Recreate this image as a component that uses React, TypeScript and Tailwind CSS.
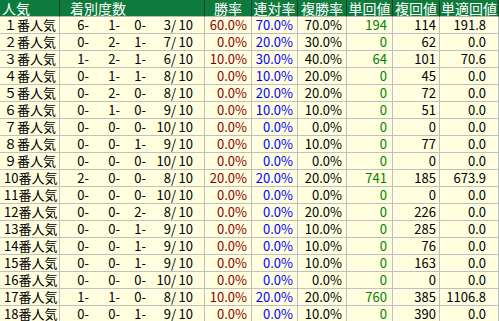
const rows: [string, string[], string, string, string, string, string, string][] = [
  ['１番人気', ['6', '1', '0', '3', '10'], '60.0%', '70.0%', '70.0%', '194', '114', '191.8'],
  ['２番人気', ['0', '2', '1', '7', '10'], '0.0%', '20.0%', '30.0%', '0', '62', '0.0'],
  ['３番人気', ['1', '2', '1', '6', '10'], '10.0%', '30.0%', '40.0%', '64', '101', '70.6'],
  ['４番人気', ['0', '1', '1', '8', '10'], '0.0%', '10.0%', '20.0%', '0', '45', '0.0'],
  ['５番人気', ['0', '2', '0', '8', '10'], '0.0%', '20.0%', '20.0%', '0', '72', '0.0'],
  ['６番人気', ['0', '1', '0', '9', '10'], '0.0%', '10.0%', '10.0%', '0', '51', '0.0'],
  ['７番人気', ['0', '0', '0', '10', '10'], '0.0%', '0.0%', '0.0%', '0', '0', '0.0'],
  ['８番人気', ['0', '0', '1', '9', '10'], '0.0%', '0.0%', '10.0%', '0', '77', '0.0'],
  ['９番人気', ['0', '0', '0', '10', '10'], '0.0%', '0.0%', '0.0%', '0', '0', '0.0'],
  ['10番人気', ['2', '0', '0', '8', '10'], '20.0%', '20.0%', '20.0%', '741', '185', '673.9'],
  ['11番人気', ['0', '0', '0', '10', '10'], '0.0%', '0.0%', '0.0%', '0', '0', '0.0'],
  ['12番人気', ['0', '0', '2', '8', '10'], '0.0%', '0.0%', '20.0%', '0', '226', '0.0'],
  ['13番人気', ['0', '0', '1', '9', '10'], '0.0%', '0.0%', '10.0%', '0', '285', '0.0'],
  ['14番人気', ['0', '0', '1', '9', '10'], '0.0%', '0.0%', '10.0%', '0', '76', '0.0'],
  ['15番人気', ['0', '0', '1', '9', '10'], '0.0%', '0.0%', '10.0%', '0', '163', '0.0'],
  ['16番人気', ['0', '0', '0', '10', '10'], '0.0%', '0.0%', '0.0%', '0', '0', '0.0'],
  ['17番人気', ['1', '1', '0', '8', '10'], '10.0%', '20.0%', '20.0%', '760', '385', '1106.8'],
  ['18番人気', ['0', '0', '1', '9', '10'], '0.0%', '0.0%', '10.0%', '0', '390', '0.0'],
];

const font = { fontFamily: '"Noto Sans CJK JP", "DejaVu Sans", sans-serif' };

const Th = ({ children, className = '' }: { children: React.ReactNode; className?: string }) => (
  <div className={`flex items-center h-[17px] border-r border-b border-r-[#1e3a28] border-b-[#b8b8b8] bg-[#0e7b3d] text-white text-[14px] leading-[14px] whitespace-nowrap ${className}`}>
    {children}
  </div>
);

const Td = ({ children, className = '' }: { children: React.ReactNode; className?: string }) => (
  <div className={`flex items-center h-[17px] border-r border-b border-[#c0c0c0] bg-[#ffffe0] text-[13px] leading-[14px] whitespace-nowrap ${className}`}>
    {children}
  </div>
);

export default function App() {
  return (
    <div className="w-[499px] h-[321px] overflow-hidden bg-white" style={font}>
      <div className="grid grid-cols-[60px_145px_47px_46px_49px_46px_47px_59px] w-[499px]">
        <Th className="pl-[2px]">人気</Th>
        <Th className="pl-[10px]">着別度数</Th>
        <Th className="justify-center">勝率</Th>
        <Th className="justify-center">連対率</Th>
        <Th className="justify-center">複勝率</Th>
        <Th className="justify-center">単回値</Th>
        <Th className="justify-center">複回値</Th>
        <Th className="justify-center">単適回値</Th>

        {rows.map(([label, c, win, ren, fuku, tan, fukuR, tanT]) => (
          <div key={label} className="contents">
            <Td className="pl-[4px] text-black">{label}</Td>
            <Td className="text-black">
              <span className="w-[29px] text-right">{c[0]}-</span>
              <span className="w-[31px] text-right">{c[1]}-</span>
              <span className="w-[26px] text-right">{c[2]}-</span>
              <span className="w-[30px] text-right">{c[3]}/</span>
              <span className="w-[17px] text-right">{c[4]}</span>
            </Td>
            <Td className="justify-end pr-[4px] text-[#8b0000]">{win}</Td>
            <Td className="justify-end pr-[4px] text-[#0000ff]">{ren}</Td>
            <Td className="justify-end pr-[4px] text-black">{fuku}</Td>
            <Td className="justify-end pr-[5px] text-[#008000]">{tan}</Td>
            <Td className="justify-end pr-[3px] text-black">{fukuR}</Td>
            <Td className="justify-end pr-[12px] text-black">{tanT}</Td>
          </div>
        ))}
      </div>
    </div>
  );
}
